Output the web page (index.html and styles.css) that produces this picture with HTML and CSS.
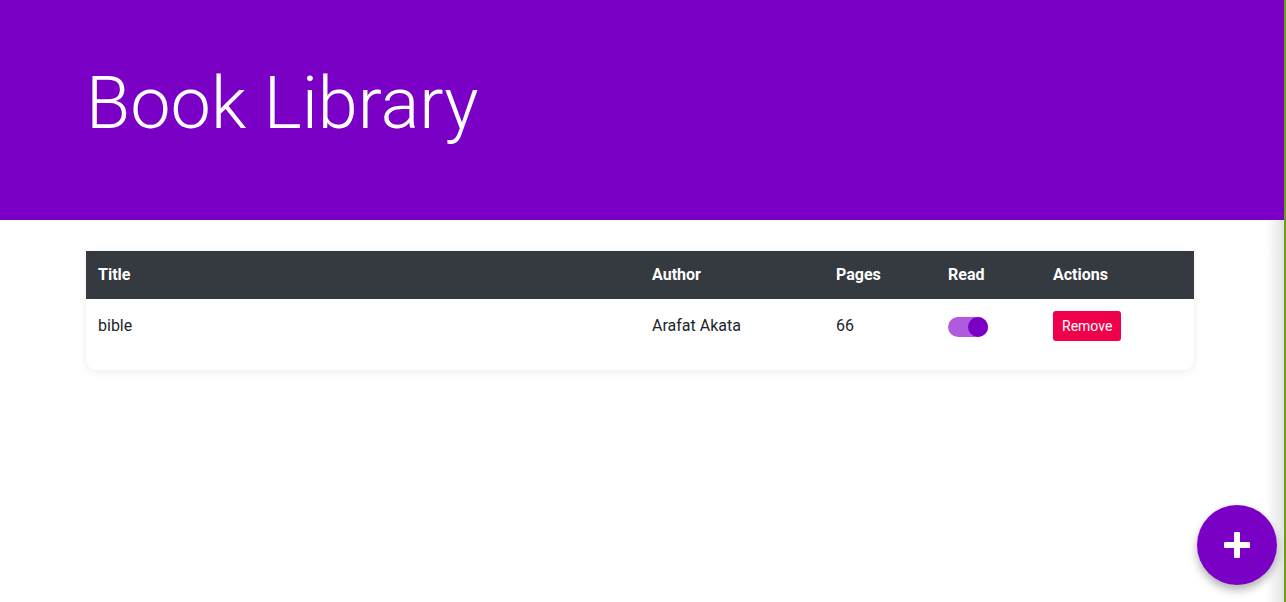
FILE: index.html
```html
<!DOCTYPE html>
<html lang="en">
<head>
<meta charset="utf-8">
<title>Book Library</title>
<link rel="stylesheet" href="styles.css">
</head>
<body>
<div class="page">
  <main class="main">
    <header class="hero">
      <h1 class="hero-title">Book Library</h1>
    </header>
    <section class="content">
      <div class="card">
        <table class="books">
          <thead>
            <tr>
              <th class="c-title">Title</th>
              <th class="c-author">Author</th>
              <th class="c-pages">Pages</th>
              <th class="c-read">Read</th>
              <th class="c-actions">Actions</th>
            </tr>
          </thead>
          <tbody>
            <tr>
              <td class="txt">bible</td>
              <td class="txt">Arafat Akata</td>
              <td class="txt">66</td>
              <td><span class="toggle"><span class="knob"></span></span></td>
              <td><button class="remove">Remove</button></td>
            </tr>
          </tbody>
        </table>
      </div>
    </section>
    <button class="fab" aria-label="Add book">
      <svg width="26" height="26" viewBox="0 0 26 26"><path d="M13 2v22M2 13h22" stroke="#fff" stroke-width="6" stroke-linecap="round"/></svg>
    </button>
  </main>
  <div class="edge"></div>
</div>
</body>
</html>
```

FILE: styles.css
```css
* { box-sizing: border-box; }
html, body { margin: 0; padding: 0; height: 100%; }
body {
  font-family: Roboto, "Liberation Sans", sans-serif;
  color: #212529;
  background: #fff;
  overflow: hidden;
}
.page {
  display: flex;
  height: 602px;
}
.main {
  position: relative;
  flex: 1;
  min-width: 0;
}
.main::after {
  content: "";
  position: absolute;
  top: 220px;
  right: 0;
  bottom: 0;
  width: 18px;
  background: linear-gradient(to right, rgba(230,230,230,0), rgba(225,225,225,0.9));
  pointer-events: none;
}
.edge {
  width: 2px;
  background: #6b9e1f;
}
.hero {
  background: #7a00c6;
  height: 220px;
  padding: 56px 0 0 86px;
}
.hero-title {
  margin: 0;
  color: #fff;
  font-weight: 300;
  font-size: 72px;
  line-height: 96px;
}
.content {
  padding: 31px 0 0 86px;
}
.card {
  width: 1108px;
  background: #fff;
  border-radius: 0 0 10px 10px;
  box-shadow: 0 2px 8px rgba(0,0,0,0.08);
  padding-bottom: 17px;
}
.books {
  width: 100%;
  border-collapse: collapse;
  font-size: 16px;
}
.books th {
  background: #343a40;
  color: #fff;
  font-weight: 700;
  text-align: left;
  height: 48px;
  padding: 0 12px 2px;
}
.books td {
  height: 54px;
  padding: 0 12px;
  vertical-align: middle;
}
.books td.txt {
  padding-bottom: 2px;
}
.c-title { width: 554px; }
.c-author { width: 184px; }
.c-pages { width: 112px; }
.c-read { width: 105px; }
.toggle {
  display: inline-flex;
  justify-content: flex-end;
  width: 40px;
  height: 20px;
  border-radius: 10px;
  background: #b05add;
  vertical-align: middle;
  margin-top: 1px;
}
.knob {
  width: 20px;
  height: 20px;
  border-radius: 50%;
  background: #7a00c6;
}
.remove {
  font-family: Roboto, "Liberation Sans", sans-serif;
  font-size: 14px;
  color: #fff;
  background: #f0004a;
  border: none;
  border-radius: 3px;
  height: 30px;
  padding: 0 9px;
  vertical-align: middle;
}
.fab {
  position: absolute;
  left: 1197px;
  top: 505px;
  width: 80px;
  height: 80px;
  border-radius: 50%;
  border: none;
  background: #7a00c6;
  box-shadow: 0 5px 8px rgba(0,0,0,0.3);
  display: flex;
  align-items: center;
  justify-content: center;
  padding: 0;
  z-index: 2;
}
```
